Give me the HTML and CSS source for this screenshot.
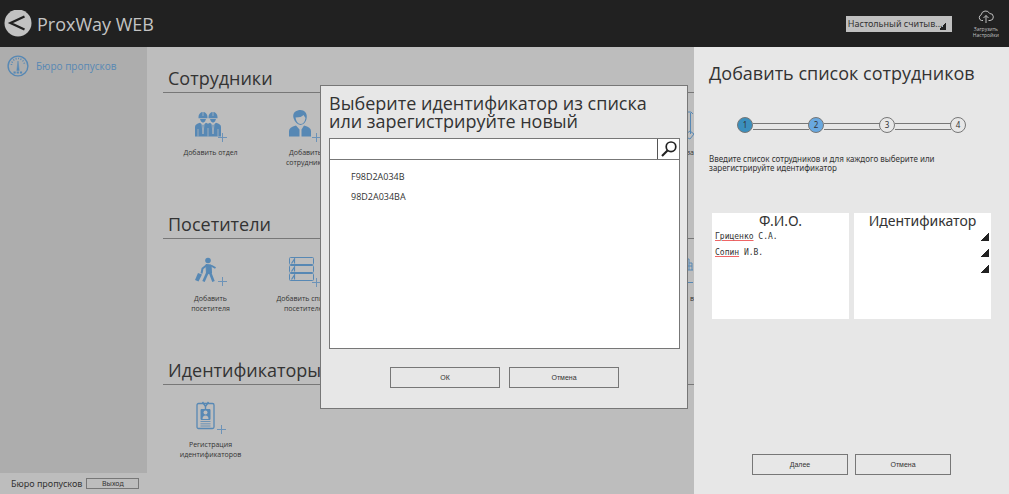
FILE: index.html
```html
<!DOCTYPE html>
<html lang="ru">
<head>
<meta charset="utf-8">
<title>ProxWay WEB</title>
<link rel="stylesheet" href="styles.css">
</head>
<body>
<header class="topbar">
  <button class="back" type="button" aria-label="Назад">
    <svg width="28" height="28" viewBox="0 0 28 28"><circle cx="14" cy="13" r="13.5" fill="#c2c2c2"/><path d="M20.500 6.500 6.500 13l14 6.500" fill="none" stroke="#212121" stroke-width="2.300"/></svg>
  </button>
  <h1 class="brand">ProxWay WEB</h1>
  <select class="reader" aria-label="Считыватель"><option>Настольный считыв...</option></select>
  <button class="upload" type="button">
    <svg width="16" height="14" viewBox="0 0 16 14" fill="none" stroke="#c0c0c0"><path d="M5 10.500H3.500A3 3 0 0 1 3.200 4.800 4.500 4.500 0 0 1 11.700 3.500 3.500 3.500 0 0 1 12 10.500H10.500"/><path d="M8 13V5.500M5.500 8 8 5.500 10.500 8"/></svg>
    <span>Загрузить<br>Настройки</span>
  </button>
</header>

<div class="layout">
  <aside class="sidebar">
    <a class="nav-item" href="#">
      <svg width="22" height="22" viewBox="0 0 22 22" fill="none" stroke="#5788b4"><circle cx="11" cy="11" r="9.900" stroke-width="1.400"/><path d="M4.500 10a6.500 6.500 0 0 1 13 0" stroke-width="1.600" stroke-dasharray="1 1.500"/><path d="m11 6 1.200 9.500H9.800z" fill="#5788b4" stroke-width=".5"/><path d="M6.500 17.500h9" stroke-width="1.800" stroke-dasharray="2.200 1"/></svg>
      <span>Бюро пропусков</span>
    </a>
    <footer class="account"><span>Бюро пропусков</span><button class="btn exit" type="button">Выход</button></footer>
  </aside>

  <main class="content">
    <section class="group">
      <h2>Сотрудники</h2>
      <div class="tiles">
        <a class="tile" href="#">
          <svg width="38" height="34" viewBox="0 0 38 34" fill="#5788b4"><path d="M6.500 9a4.500 5 0 0 1 9 0v1.200h-9zM16.500 9a4.500 5 0 0 1 9 0v1.200h-9zM8 11h6l-1 2.500-2 1.300-2-1.300zM18 11h6l-1 2.500-2 1.300-2-1.300z"/><path d="M3 28.500V19q0-3 5-4.200l3 2.500 3-2.500 2 1 2-1 3 2.500 3-2.500q5 1.200 5 4.200v9.500z"/><path d="M11 4v4M21 4v4M6 21v7.500M10 16l1 10 1-10M16 20v8.500M20 16l1 10 1-10M26 21v7.500" fill="none" stroke="#bdbdbd" stroke-width=".7"/><path class="plus" d="M30.500 25v9M26 29.500h9"/></svg>
          <span>Добавить отдел</span>
        </a>
        <a class="tile" href="#">
          <svg width="38" height="34" viewBox="0 0 38 34" fill="#5788b4"><path d="M6.500 10C5 4 10 2 13.500 2S21 5 19.500 11q-1 5-6 6-5-1-7-7z"/><path d="M8.500 9.500q6 0 8-2.500l2 3q-1 6-5 6t-5-6.500z" fill="#bdbdbd"/><path d="M2 28.500V23q0-4 7-5.500l3.500 4v7zM24 28.500V23q0-4-7-5.500l-2.500 4v7z"/><path class="plus" d="M29.500 25v9M25 29.500h9"/></svg>
          <span>Добавить<br>сотрудника</span>
        </a>
        <a class="tile tile-last" href="#">
          <svg width="8" height="34" viewBox="0 0 8 34" fill="none" stroke="#5788b4"><path d="M0 4h5l2 2M4.500 5v21M0 26l4-3 4 3-4 5-4-2"/></svg>
          <span>за</span>
        </a>
      </div>
    </section>
    <section class="group">
      <h2>Посетители</h2>
      <div class="tiles">
        <a class="tile" href="#">
          <svg width="38" height="34" viewBox="0 0 38 34" fill="none" stroke="#5788b4"><circle cx="16" cy="6.500" r="2.800" fill="#5788b4" stroke="none"/><path d="m14 10.500 5 .500.500 8-5 1z" fill="#5788b4"/><path d="m15 11-4.500 3.500-1 5M19 11.500l4.500 2.500" stroke-width="2"/><path d="m15.500 18.500-4 9M18 18.500l3.500 9" stroke-width="2.600"/><path d="m6 19 4 1.500L6.500 27.500 3 26z" fill="#5788b4" stroke="none"/><path class="plus" d="M30.500 23v9M26 27.500h9"/></svg>
          <span>Добавить<br>посетителя</span>
        </a>
        <a class="tile" href="#">
          <svg width="38" height="34" viewBox="0 0 38 34" fill="none" stroke="#5788b4"><rect x="2.500" y="3.500" width="24" height="7" rx="1"/><rect x="2.500" y="11.500" width="24" height="7" rx="1"/><rect x="2.500" y="19.500" width="24" height="7" rx="1"/><path d="m4.500 9.500 3-4.500v4.500M4.500 17.500l3-4.500v4.500M4.500 25.500l3-4.500v4.500" stroke-width="1.200"/><path class="plus" d="M29.500 24v9M25 28.500h9"/></svg>
          <span>Добавить список<br>посетителей</span>
        </a>
        <a class="tile tile-last" href="#">
          <svg width="8" height="34" viewBox="0 0 8 34" fill="none" stroke="#5788b4"><path d="M0 5h3v4h3v3H1M0 16h7M3 9v7M6 12v4M0 28.500h7"/></svg>
          <span>в</span>
        </a>
      </div>
    </section>
    <section class="group">
      <h2>Идентификаторы</h2>
      <div class="tiles">
        <a class="tile" href="#">
          <svg width="38" height="34" viewBox="0 0 38 34" fill="none" stroke="#5788b4"><rect x="5" y="3.500" width="17" height="25" rx="1.500" stroke-width="1.300"/><path d="m10.500 2 3 4.500 3-4.500M13.500 5v4" stroke-width="1.400"/><path d="M9 9.500h9v10H9z" fill="#5788b4"/><circle cx="13.500" cy="12.500" r="2" fill="#bdbdbd" stroke="none"/><path d="M10.500 19q0-3.500 3-3.500t3 3.500z" fill="#bdbdbd" stroke="none"/><path d="M8.500 21.500h10M8.500 23.800h10M8.500 26h10" stroke-width=".8"/><path class="plus" d="M29.500 25v9M25 29.500h9"/></svg>
          <span>Регистрация<br>идентификаторов</span>
        </a>
      </div>
    </section>
  </main>

  <aside class="panel">
    <h2>Добавить список сотрудников</h2>
    <ol class="steps">
      <li class="step done">1</li><li class="step current">2</li><li class="step">3</li><li class="step">4</li>
    </ol>
    <p class="hint">Введите список сотрудников и для каждого выберите или зарегистрируйте идентификатор</p>
    <div class="lists">
      <section class="list">
        <h3>Ф.И.О.</h3>
        <div class="names" contenteditable="true" role="textbox" aria-label="Ф.И.О." spellcheck="false"><div><u>Гриценко</u> С.А.</div><div><u>Сопин</u> И.В.</div></div>
      </section>
      <section class="list">
        <h3>Идентификатор</h3>
        <select class="pick" aria-label="Идентификатор 1"></select>
        <select class="pick" aria-label="Идентификатор 2"></select>
        <select class="pick" aria-label="Идентификатор 3"></select>
      </section>
    </div>
    <div class="panel-actions"><button class="btn" type="button">Далее</button><button class="btn" type="button">Отмена</button></div>
  </aside>
</div>

<div class="overlay">
  <section class="dialog" role="dialog" aria-labelledby="dialog-title">
    <h2 id="dialog-title">Выберите идентификатор из списка или зарегистрируйте новый</h2>
    <div class="picker">
      <div class="search">
        <input type="text" aria-label="Поиск идентификатора">
        <button type="button" aria-label="Найти"><svg width="18" height="18" viewBox="0 0 18 18" fill="none" stroke="#222"><circle cx="11" cy="6.800" r="4.800" stroke-width="1.700"/><path d="m7.500 10.500-5.500 5.500" stroke-width="2.200"/></svg></button>
      </div>
      <ul class="ids"><li>F98D2A034B</li><li>98D2A034BA</li></ul>
    </div>
    <div class="dialog-actions"><button class="btn" type="button">ОК</button><button class="btn" type="button">Отмена</button></div>
  </section>
</div>
</body>
</html>
```
FILE: styles.css
```css
* { box-sizing: border-box; }
body {
  margin: 0;
  min-height: 100vh;
  display: flex;
  flex-direction: column;
  background: #bdbdbd;
  color: #333;
  font-family: "Open Sans", "Noto Sans", sans-serif;
  font-size: 8px;
}
h1, h2, h3, p, ol, ul { margin: 0; padding: 0; font-weight: 400; }
ol, ul { list-style: none; }
a { color: inherit; text-decoration: none; }
button, input, select { font: inherit; color: inherit; border-radius: 0; }
svg { display: block; }

.topbar {
  display: flex;
  align-items: center;
  height: 47px;
  padding: 0 10px 0 4px;
  background: #212121;
}
.back { padding: 0; border: 0; background: none; }
.brand { flex: 1; padding-left: 5px; font-size: 18px; line-height: 24px; color: #c4c4c4; }
.reader {
  appearance: none;
  width: 106px;
  height: 16px;
  margin-right: 21px;
  padding: 0 2px;
  border: 0;
  background: linear-gradient(135deg, transparent 50%, #222 50%) right 6px bottom 2px / 7px 7px no-repeat #c0c0c0;
  font-family: "Noto Sans", sans-serif;
  font-size: 9px;
}
.upload {
  display: flex;
  flex-direction: column;
  align-items: center;
  gap: 2px;
  padding: 0;
  border: 0;
  background: none;
  color: #c0c0c0;
  font-size: 5px;
  line-height: 6px;
}

.layout { flex: 1; display: flex; }
.sidebar { display: flex; flex-direction: column; width: 147px; background: #adadad; }
.nav-item {
  flex: 1;
  display: flex;
  align-items: flex-start;
  gap: 7px;
  padding: 8px 7px;
  color: #5788b4;
  font-size: 10px;
  line-height: 22px;
}
.account {
  display: flex;
  align-items: center;
  gap: 4px;
  height: 21px;
  padding-left: 11px;
  background: #bdbdbd;
  font-family: "Noto Sans", sans-serif;
  font-size: 9px;
}

.content { flex: 1; min-width: 0; padding-left: 16px; overflow: hidden; }
.group { height: 146px; }
.group h2 {
  height: 46px;
  padding: 18px 0 0 5px;
  border-bottom: 1px solid #777;
  font-size: 18px;
  line-height: 26px;
}
.tiles { display: grid; grid-template-columns: repeat(5, 95px) 1fr; padding-top: 15px; }
.tile {
  display: flex;
  flex-direction: column;
  align-items: center;
  gap: 6px;
  font-size: 7px;
  line-height: 10px;
  text-align: center;
  white-space: nowrap;
}
.tile-last { grid-column: 6; align-items: flex-end; }
.plus { fill: none; stroke: #6d93b8; stroke-width: 1; }

.panel {
  display: flex;
  flex-direction: column;
  width: 315px;
  padding: 13px 15px 19px;
  background: #e7e7e7;
}
.panel h2 { font-size: 18px; line-height: 26px; white-space: nowrap; }
.steps {
  display: flex;
  align-items: center;
  justify-content: space-between;
  padding: 31px 28px 0;
  font-family: "Noto Sans", sans-serif;
}
.step {
  flex: none;
  width: 16px;
  height: 16px;
  border: 1px solid #777;
  border-radius: 50%;
  line-height: 14px;
  text-align: center;
}
.step + .step::before {
  content: "";
  position: absolute;
  width: 56px;
  height: 5px;
  margin: 5px 0 0 -61px;
  border: solid #777;
  border-width: 1px 0;
}
.done { background: #3b8fbd; }
.current { background: #69a8df; }
.hint { padding-top: 21px; font-family: "Noto Sans", sans-serif; line-height: 9px; }
.lists { display: flex; gap: 5px; padding: 41px 0 0 3px; margin-right: 3px; }
.list { flex: 1; height: 106px; background: #fff; }
.list h3 { font-family: "Noto Sans", sans-serif; font-size: 14px; line-height: 16px; text-align: center; }
.names { padding: 0 3px; font-family: "DejaVu Sans Mono", monospace; font-size: 8px; line-height: 16px; }
.names u { text-decoration: underline #e66 1px; text-underline-offset: 1px; }
.pick {
  appearance: none;
  display: block;
  width: 100%;
  height: 16px;
  border: 0;
  background: linear-gradient(135deg, transparent 50%, #222 50%) right 2px center / 8px 8px no-repeat;
}
.btn {
  width: 96px;
  height: 21px;
  padding: 0;
  border: 1px solid #777;
  background: none;
  font-family: "Liberation Sans", Arial, sans-serif;
  font-size: 7px;
}
.exit { width: 53px; height: 11px; font-family: inherit; line-height: 9px; }
.panel-actions { display: flex; justify-content: center; gap: 7px; margin-top: auto; }

.overlay {
  position: absolute;
  inset: 0;
  display: flex;
  align-items: center;
  justify-content: center;
  padding: 0 1px 1px 0;
}
.dialog {
  width: 368px;
  padding: 8px 7px 20px 8px;
  border: 1px solid #777;
  background: #e7e7e7;
}
.dialog h2 { font-size: 18px; line-height: 18px; }
.picker { margin-top: 8px; height: 211px; border: 1px solid #777; background: #fff; }
.search { display: flex; height: 21px; border-bottom: 1px solid #777; }
.search input { flex: 1; min-width: 0; padding: 0 4px; border: 0; background: none; }
.search button { width: 22px; padding: 0 2px; border: 0; border-left: 1px solid #555; background: none; }
.ids { padding: 7px 21px; font-size: 9px; line-height: 20px; }
.dialog-actions { display: flex; justify-content: center; gap: 9px; margin-top: 18px; }
.dialog-actions .btn { width: 110px; }
```
